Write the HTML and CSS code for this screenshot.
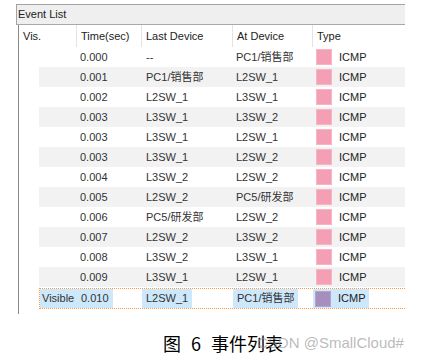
FILE: index.html
```html
<!DOCTYPE html>
<html lang="zh">
  <head>
    <meta charset="UTF-8" />
    <meta name="viewport" content="width=device-width, initial-scale=1.0" />
    <title>Event List</title>
    <link rel="stylesheet" href="styles.css">
  </head>
  <body>
    <div class="panel">
      <div class="title">Event List</div>
      <div class="list">
        <div class="head">
          <span>Vis.</span>
          <span>Time(sec)</span>
          <span>Last Device</span>
          <span>At Device</span>
          <span>Type</span>
        </div>
        <div class="rows">
          <div class="row">
            <span></span><span>0.000</span><span>--</span><span>PC1/销售部</span>
            <span class="type"><i class="swatch"></i>ICMP</span>
          </div>
          <div class="row">
            <span></span><span>0.001</span><span>PC1/销售部</span><span>L2SW_1</span>
            <span class="type"><i class="swatch"></i>ICMP</span>
          </div>
          <div class="row">
            <span></span><span>0.002</span><span>L2SW_1</span><span>L3SW_1</span>
            <span class="type"><i class="swatch"></i>ICMP</span>
          </div>
          <div class="row">
            <span></span><span>0.003</span><span>L3SW_1</span><span>L3SW_2</span>
            <span class="type"><i class="swatch"></i>ICMP</span>
          </div>
          <div class="row">
            <span></span><span>0.003</span><span>L3SW_1</span><span>L2SW_1</span>
            <span class="type"><i class="swatch"></i>ICMP</span>
          </div>
          <div class="row">
            <span></span><span>0.003</span><span>L3SW_1</span><span>L2SW_2</span>
            <span class="type"><i class="swatch"></i>ICMP</span>
          </div>
          <div class="row">
            <span></span><span>0.004</span><span>L3SW_2</span><span>L2SW_2</span>
            <span class="type"><i class="swatch"></i>ICMP</span>
          </div>
          <div class="row">
            <span></span><span>0.005</span><span>L2SW_2</span><span>PC5/研发部</span>
            <span class="type"><i class="swatch"></i>ICMP</span>
          </div>
          <div class="row">
            <span></span><span>0.006</span><span>PC5/研发部</span><span>L2SW_2</span>
            <span class="type"><i class="swatch"></i>ICMP</span>
          </div>
          <div class="row">
            <span></span><span>0.007</span><span>L2SW_2</span><span>L3SW_2</span>
            <span class="type"><i class="swatch"></i>ICMP</span>
          </div>
          <div class="row">
            <span></span><span>0.008</span><span>L3SW_2</span><span>L3SW_1</span>
            <span class="type"><i class="swatch"></i>ICMP</span>
          </div>
          <div class="row">
            <span></span><span>0.009</span><span>L3SW_1</span><span>L2SW_1</span>
            <span class="type"><i class="swatch"></i>ICMP</span>
          </div>
          <div class="row current">
            <span class="vis"><b>Visible</b></span>
            <span><b>0.010</b></span>
            <span><b>L2SW_1</b></span>
            <span><b>PC1/销售部</b></span>
            <span class="type"><b><i class="swatch sel"></i>ICMP</b></span>
          </div>
        </div>
      </div>
    </div>
    <div class="caption">图&nbsp;6&nbsp;事件列表</div>
    <div class="mark">CSDN @SmallCloud#</div>
  </body>
</html>
```

FILE: styles.css
```css
* {
  margin: 0;
  padding: 0;
  box-sizing: border-box;
}
body {
  width: 424px;
  height: 361px;
  position: relative;
  background: #fff;
  font-family: "Liberation Sans", "Noto Sans CJK SC", sans-serif;
  font-size: 11px;
  color: #333;
  overflow: hidden;
}
.panel {
  margin: 4px 0 0 16px;
  width: 389px;
  border-top: 1px solid #a3a3a3;
}
.title {
  height: 20px;
  line-height: 19px;
  padding-left: 1px;
  background: #efefef;
  border-left: 1px solid #a3a3a3;
  border-bottom: 1px solid #a8a8a8;
  color: #222;
}
.list {
  margin-left: 2px;
  height: 289px;
  border-left: 1px solid #8a8a8a;
}
.head,
.row {
  display: grid;
  grid-template-columns: 57px 65px 91px 80px 93px;
  white-space: nowrap;
}
.head {
  height: 22px;
  line-height: 22px;
  color: #222;
}
.head span {
  padding-left: 4px;
}
.head span + span {
  border-left: 1px solid #e3e3e3;
}
.rows {
  margin-left: 20px;
}
.row {
  grid-template-columns: 37px 65px 91px 80px 93px;
  height: 20px;
  line-height: 20px;
}
.row:nth-child(even) {
  background: #f2f2f2;
}
.row span {
  padding-left: 4px;
}
.row span:nth-child(3) {
  padding-left: 5px;
}
.type {
  display: flex;
  align-items: center;
  color: #222;
}
.swatch {
  width: 16px;
  height: 16px;
  margin-right: 7px;
  background: #f49fb4;
  border: 1px solid #f7b5c5;
}
.current {
  margin-top: 1px;
  height: 21px;
  line-height: 19px;
  border-top: 1px dotted #f19a4c;
  border-bottom: 1px dotted #f19a4c;
  border-left: 1px dotted #f19a4c;
}
.current span,
.current span:nth-child(3) {
  padding-left: 0;
}
.current b {
  font-weight: normal;
  display: inline-block;
  padding: 0 4px;
  background: #cde7fb;
}
.current .vis b {
  display: block;
  padding-left: 2px;
}
.current .type b {
  display: flex;
  align-items: center;
  height: 19px;
  padding: 0 3px 0 2px;
}
.swatch.sel {
  background: #a68fbe;
  border-color: #b6a3cc;
}
.caption {
  margin-top: 16px;
  padding-left: 163px;
  font-family: "Noto Sans CJK SC", sans-serif;
  font-size: 18px;
  line-height: 26px;
  word-spacing: 6px;
  color: #000;
}
.mark {
  position: absolute;
  left: 257px;
  top: 334px;
  font-size: 15px;
  line-height: 18px;
  color: rgba(140, 140, 140, 0.6);
}
```
